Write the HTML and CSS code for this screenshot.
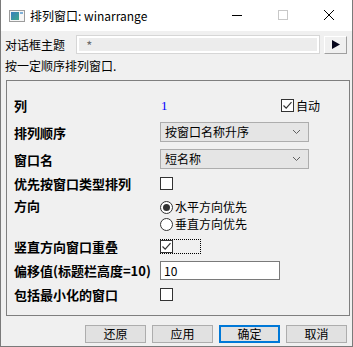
FILE: index.html
```html
<!DOCTYPE html>
<html lang="zh-CN">
<head>
    <meta charset="UTF-8">
    <title>排列窗口: winarrange</title>
    <link rel="stylesheet" href="styles.css">
</head>
<body>
    <div class="window">
        <div class="titlebar">
            <svg class="app-icon" width="16" height="12" viewBox="0 0 16 12">
                <defs>
                    <linearGradient id="pane" x1="0" y1="0" x2="1" y2="1">
                        <stop offset="0" stop-color="#3a7fc0"/>
                        <stop offset="1" stop-color="#3fa88a"/>
                    </linearGradient>
                </defs>
                <rect x="0.5" y="0.5" width="15" height="11" fill="#f6f6f6" stroke="#9c9c9c"/>
                <rect x="2" y="2" width="8" height="8" fill="url(#pane)"/>
                <rect x="11" y="2" width="3" height="2" fill="#7fb0d8"/>
            </svg>
            <span class="title">排列窗口: winarrange</span>
            <div class="controls">
                <div class="ctl">
                    <svg width="10" height="10" viewBox="0 0 10 10"><path d="M0 5.5H10" stroke="#000" stroke-width="1"/></svg>
                </div>
                <div class="ctl">
                    <svg width="10" height="10" viewBox="0 0 10 10"><rect x="0.5" y="0.5" width="9" height="9" fill="none" stroke="#c8c8c8"/></svg>
                </div>
                <div class="ctl">
                    <svg width="10" height="10" viewBox="0 0 10 10"><path d="M0 0L10 10M10 0L0 10" stroke="#000" stroke-width="1"/></svg>
                </div>
            </div>
        </div>

        <div class="content">
            <div class="theme-row">
                <span class="theme-label">对话框主题</span>
                <div class="theme-input">*</div>
                <div class="arrow-btn">
                    <svg width="8" height="9" viewBox="0 0 8 9"><path d="M0 0L8 4.5L0 9Z" fill="#05051a"/></svg>
                </div>
            </div>
            <div class="hint">按一定顺序排列窗口.</div>

            <div class="group">
                <div class="row r-cols">
                    <span class="label">列</span>
                    <span class="value">1</span>
                    <span class="check-item">
                        <span class="checkbox checked"><svg width="11" height="11" viewBox="0 0 11 11"><path d="M1.5 5.5L4.2 8.2L9.5 2.2" fill="none" stroke="#333" stroke-width="1.2"/></svg></span>
                        自动
                    </span>
                </div>
                <div class="row r-combo">
                    <span class="label">排列顺序</span>
                    <div class="combo">按窗口名称升序<svg class="chev" width="7" height="4" viewBox="0 0 7 4"><path d="M0 0L3.5 3.5L7 0" fill="none" stroke="#606060"/></svg></div>
                </div>
                <div class="row r-combo">
                    <span class="label">窗口名</span>
                    <div class="combo">短名称<svg class="chev" width="7" height="4" viewBox="0 0 7 4"><path d="M0 0L3.5 3.5L7 0" fill="none" stroke="#606060"/></svg></div>
                </div>
                <div class="row r-small">
                    <span class="label">优先按窗口类型排列</span>
                    <span class="checkbox"></span>
                </div>
                <div class="row r-radio">
                    <span class="label">方向</span>
                    <div class="radios">
                        <span class="radio-item"><span class="radio selected"></span>水平方向优先</span>
                        <span class="radio-item"><span class="radio"></span>垂直方向优先</span>
                    </div>
                </div>
                <div class="row r-small">
                    <span class="label">竖直方向窗口重叠</span>
                    <span class="focus-box">
                        <span class="checkbox checked"><svg width="11" height="11" viewBox="0 0 11 11"><path d="M1.5 5.5L4.2 8.2L9.5 2.2" fill="none" stroke="#333" stroke-width="1.2"/></svg></span>
                    </span>
                </div>
                <div class="row r-input">
                    <span class="label">偏移值(标题栏高度=10)</span>
                    <div class="text-input">10</div>
                </div>
                <div class="row r-small">
                    <span class="label">包括最小化的窗口</span>
                    <span class="checkbox"></span>
                </div>
            </div>

            <div class="buttons">
                <button class="btn">还原</button>
                <button class="btn">应用</button>
                <button class="btn default">确定</button>
                <button class="btn">取消</button>
            </div>
        </div>
    </div>
</body>
</html>
```

FILE: styles.css
```css
body {
    margin: 0;
    background-color: #f0f0f0;
}

.window {
    width: 353px;
    height: 347px;
    box-sizing: border-box;
    border: 1px solid #7a7a7a;
    border-top: none;
    background-color: #f0f0f0;
    display: flex;
    flex-direction: column;
    font-family: "Noto Sans CJK SC", "Noto Sans", sans-serif;
    font-size: 12px;
    color: #000;
}

.titlebar {
    height: 31px;
    flex-shrink: 0;
    background-color: #fff;
    display: flex;
    align-items: center;
}

.app-icon {
    margin-left: 8px;
}

.title {
    margin-left: 5px;
    font-size: 12px;
    line-height: 14px;
}

.controls {
    margin-left: auto;
    display: flex;
    height: 31px;
}

.ctl {
    width: 46px;
    height: 31px;
    display: flex;
    align-items: center;
    justify-content: center;
}

.ctl svg {
    display: block;
    margin-top: -1px;
}

.content {
    padding-left: 4px;
    padding-right: 5px;
    display: flex;
    flex-direction: column;
}

.theme-row {
    margin-top: 4px;
    height: 19px;
    display: flex;
    align-items: center;
}

.theme-label {
    width: 72px;
    line-height: 14px;
}

.theme-input {
    width: 246px;
    height: 19px;
    box-sizing: border-box;
    border: 1px solid #d6d6d6;
    box-shadow: inset 0 0 0 2px #fff;
    background-color: #ececec;
    color: #6d6d6d;
    padding-left: 9px;
    line-height: 19px;
    font-size: 13px;
}

.arrow-btn {
    margin-left: 4px;
    width: 23px;
    height: 18px;
    box-sizing: border-box;
    border: 1px solid;
    border-color: #fff #a0a0a0 #a0a0a0 #fff;
    background-color: #f0f0f0;
    display: flex;
    align-items: center;
    justify-content: center;
}

.hint {
    margin-top: 5px;
    line-height: 14px;
}

.group {
    margin-top: 7px;
    margin-left: 1px;
    width: 344px;
    height: 236px;
    box-sizing: border-box;
    border: 1px solid #7f7f7f;
    padding: 15px 7px 0 7px;
    display: flex;
    flex-direction: column;
    gap: 7px;
}

.row {
    display: flex;
    align-items: center;
}

.r-cols { height: 19px; }
.r-combo { height: 20px; }
.r-small { height: 15px; }
.r-radio { height: 34px; align-items: flex-start; }
.r-input { height: 19px; }

.label {
    width: 146px;
    flex-shrink: 0;
    font-weight: bold;
    font-size: 13px;
    line-height: 15px;
}

.r-radio .label {
    margin-top: 0;
}

.value {
    width: 120px;
    padding-left: 1px;
    color: #0000ff;
    font-family: "Liberation Serif", serif;
    font-size: 13px;
}

.check-item {
    display: flex;
    align-items: center;
    gap: 2px;
    line-height: 14px;
}

.checkbox {
    width: 13px;
    height: 13px;
    box-sizing: border-box;
    border: 1px solid #333;
    background-color: #fff;
    display: flex;
    align-items: center;
    justify-content: center;
    flex-shrink: 0;
}

.checkbox svg {
    display: block;
}

.combo {
    width: 149px;
    height: 20px;
    box-sizing: border-box;
    border: 1px solid #adadad;
    background-color: #e5e5e5;
    padding-left: 4px;
    display: flex;
    align-items: center;
    line-height: 14px;
}

.chev {
    margin-left: auto;
    margin-right: 8px;
}

.radios {
    display: flex;
    flex-direction: column;
    gap: 3px;
    margin-top: 2px;
}

.radio-item {
    display: flex;
    align-items: center;
    gap: 2px;
    height: 14px;
    line-height: 14px;
}

.radio {
    width: 13px;
    height: 13px;
    box-sizing: border-box;
    border: 1px solid #333;
    border-radius: 50%;
    background-color: #fff;
    display: flex;
    align-items: center;
    justify-content: center;
}

.radio.selected::after {
    content: "";
    width: 7px;
    height: 7px;
    border-radius: 50%;
    background-color: #333;
}

.focus-box {
    width: 41px;
    height: 15px;
    box-sizing: border-box;
    border: 1px dotted #000;
    display: flex;
    align-items: center;
}

.focus-box .checkbox {
    margin-left: -1px;
}

.text-input {
    width: 120px;
    height: 19px;
    box-sizing: border-box;
    border: 1px solid #7a7a7a;
    background-color: #fff;
    padding-left: 3px;
    line-height: 17px;
}

.buttons {
    margin-top: 9px;
    display: flex;
    justify-content: flex-end;
    gap: 6px;
}

.btn {
    width: 61px;
    height: 18px;
    box-sizing: border-box;
    border: 1px solid #adadad;
    background-color: #e1e1e1;
    font-family: "Noto Sans CJK SC", sans-serif;
    font-size: 12px;
    line-height: 14px;
    padding: 0;
    color: #000;
}

.btn.default {
    border: 2px solid #0078d7;
}
```
